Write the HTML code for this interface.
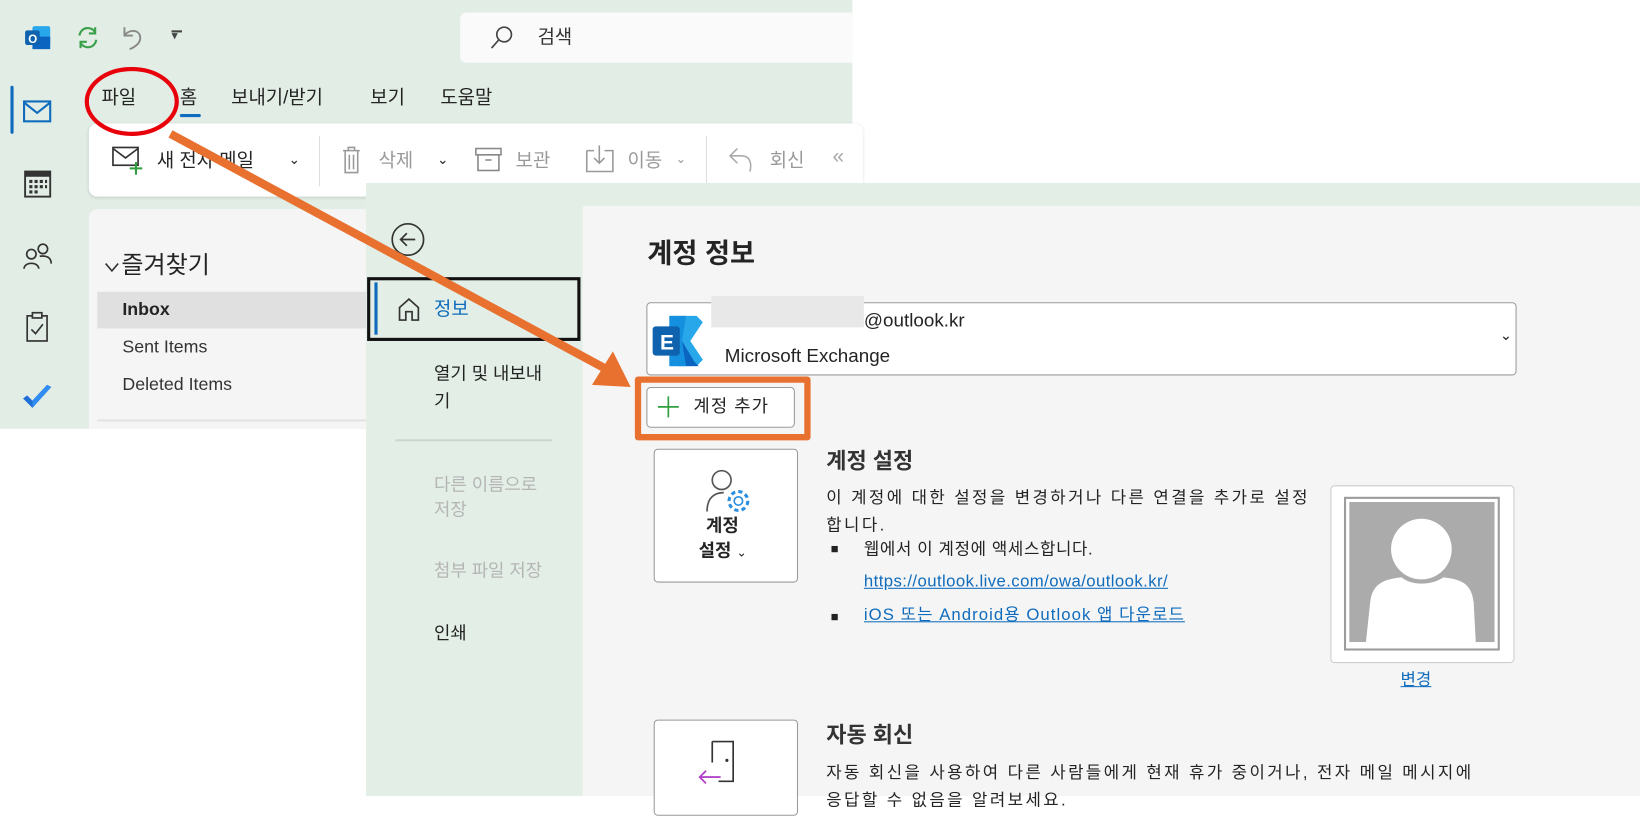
<!DOCTYPE html>
<html><head><meta charset="utf-8">
<style>
html,body{margin:0;padding:0;width:1640px;height:796px;overflow:hidden;background:#fff}
#s{position:absolute;left:0;top:0;width:1568px;height:761px;transform:scale(1.0459);transform-origin:0 0;font-family:"Liberation Sans","Noto Sans CJK KR",sans-serif;color:#242424}
.a{position:absolute}
.t{position:absolute;white-space:nowrap;line-height:1}
</style></head><body><div id="s">
<div class="a" style="left:0;top:0;width:815px;height:410px;background:#e2ede5"></div>
<div class="a" style="left:440px;top:12px;width:375px;height:48px;background:#fafafa;border-radius:6px 0 0 6px"></div>
<svg class="a" style="left:465px;top:22px" width="28" height="28" viewBox="0 0 28 28"><circle cx="17" cy="11" r="7" fill="none" stroke="#444" stroke-width="1.6"/><path d="M12 16 L5 24" stroke="#444" stroke-width="1.6"/></svg>
<div class="t" style="left:514px;top:26px;font-size:18px;color:#333">검색</div>
<svg class="a" style="left:22px;top:22px" width="28" height="28"><rect x="9" y="3" width="17" height="20" rx="2" fill="#28a8ea"/><rect x="9" y="13" width="17" height="12" fill="#0a64c0"/><rect x="2" y="7" width="14" height="14" rx="2" fill="#0f62ae"/><text x="5" y="19" font-size="11" font-weight="bold" fill="#fff" font-family="Liberation Sans">O</text></svg>
<svg class="a" style="left:70px;top:22px" width="28" height="28"><path d="M6 12 A8 8 0 0 1 21 9 M22 16 A8 8 0 0 1 7 19" fill="none" stroke="#3aa04a" stroke-width="2"/><path d="M21 4 V10 H15 M7 24 V18 H13" fill="none" stroke="#3aa04a" stroke-width="2"/></svg>
<svg class="a" style="left:113px;top:22px" width="28" height="28"><path d="M6 4 V12 H14 M6 12 C10 6 20 6 21 13 C22 19 16 23 11 25" fill="none" stroke="#888" stroke-width="1.8"/></svg>
<div class="t" style="left:164px;top:28px;font-size:12px;color:#444">▾</div>
<div class="a" style="left:164px;top:29px;width:10px;height:1.5px;background:#444"></div>
<div class="a" style="left:10px;top:82px;width:3px;height:46px;background:#0f6cbd;border-radius:2px"></div>
<svg class="a" style="left:22px;top:95px" width="28" height="24"><rect x="1" y="2" width="25" height="19" fill="none" stroke="#0f6cbd" stroke-width="2"/><path d="M1 3 L13.5 13 L26 3" fill="none" stroke="#0f6cbd" stroke-width="2"/></svg>
<svg class="a" style="left:22px;top:160px" width="28" height="30"><rect x="2" y="4" width="24" height="24" fill="none" stroke="#333" stroke-width="1.8"/><rect x="2" y="4" width="24" height="5" fill="#333"/><g fill="#333"><rect x="6" y="12" width="3" height="3"/><rect x="11" y="12" width="3" height="3"/><rect x="16" y="12" width="3" height="3"/><rect x="21" y="12" width="2" height="3"/><rect x="6" y="17" width="3" height="3"/><rect x="11" y="17" width="3" height="3"/><rect x="16" y="17" width="3" height="3"/><rect x="21" y="17" width="2" height="3"/><rect x="6" y="22" width="3" height="3"/><rect x="11" y="22" width="3" height="3"/></g></svg>
<svg class="a" style="left:20px;top:230px" width="32" height="30"><circle cx="10" cy="13" r="4.5" fill="none" stroke="#333" stroke-width="1.6"/><path d="M3 27 C3 20 17 20 17 27" fill="none" stroke="#333" stroke-width="1.6"/><circle cx="21" cy="8" r="4.5" fill="none" stroke="#333" stroke-width="1.6"/><path d="M18 15 C24 14 29 16 29 22" fill="none" stroke="#333" stroke-width="1.6"/></svg>
<svg class="a" style="left:22px;top:297px" width="28" height="32"><rect x="4" y="5" width="19" height="24" fill="none" stroke="#333" stroke-width="1.6"/><rect x="9" y="2" width="9" height="5" fill="#e2ede5" stroke="#333" stroke-width="1.6"/><path d="M8 18 L12 22 L19 13" fill="none" stroke="#333" stroke-width="1.6"/></svg>
<svg class="a" style="left:20px;top:366px" width="32" height="28"><path d="M2 15 L11 24 L29 4 L25 2 L11 17 L6 12 Z" fill="#1f6fd6"/><path d="M11 24 L29 4 L25 2 L11 17Z" fill="#2f8cf0"/></svg>
<div class="t" style="left:97px;top:84px;font-size:18px">파일</div>
<div class="t" style="left:172px;top:84px;font-size:18px">홈</div>
<div class="a" style="left:172px;top:109px;width:20px;height:3px;background:#0f6cbd;border-radius:2px"></div>
<div class="t" style="left:221px;top:84px;font-size:18px">보내기/받기</div>
<div class="t" style="left:354px;top:84px;font-size:18px">보기</div>
<div class="t" style="left:421px;top:84px;font-size:18px">도움말</div>
<div class="a" style="left:85px;top:118px;width:740px;height:70px;background:#fff;border-radius:8px;box-shadow:0 1px 3px rgba(0,0,0,.12)"></div>
<svg class="a" style="left:106px;top:138px" width="36" height="32"><rect x="2" y="3" width="24" height="17" fill="none" stroke="#333" stroke-width="1.6"/><path d="M2 4 L14 13 L26 4" fill="none" stroke="#333" stroke-width="1.6"/><path d="M24 17 V29 M18 23 H30" stroke="#2e9e3e" stroke-width="2"/></svg>
<div class="t" style="left:150px;top:144px;font-size:18px">새 전자 메일</div>
<div class="t" style="left:276px;top:146px;font-size:13px">⌄</div>
<div class="a" style="left:305px;top:130px;width:1px;height:48px;background:#ddd"></div>
<svg class="a" style="left:325px;top:138px" width="22" height="30"><path d="M3 6 H19 M8 6 V3 H14 V6 M5 6 V27 H17 V6 M9 10 V24 M13 10 V24" fill="none" stroke="#999" stroke-width="1.5"/></svg>
<div class="t" style="left:362px;top:144px;font-size:18px;color:#999">삭제</div>
<div class="t" style="left:418px;top:146px;font-size:13px">⌄</div>
<svg class="a" style="left:453px;top:140px" width="30" height="26"><rect x="2" y="2" width="24" height="6" fill="none" stroke="#888" stroke-width="1.5"/><rect x="4" y="8" width="20" height="15" fill="none" stroke="#888" stroke-width="1.5"/><path d="M11 13 H17" stroke="#888" stroke-width="1.5"/></svg>
<div class="t" style="left:493px;top:144px;font-size:18px;color:#999">보관</div>
<svg class="a" style="left:558px;top:136px" width="32" height="32"><path d="M3 8 H10 M20 8 H28 V28 H3 V8" fill="none" stroke="#999" stroke-width="1.5"/><path d="M15 3 V20 M10 15 L15 20 L20 15" fill="none" stroke="#999" stroke-width="1.5"/></svg>
<div class="t" style="left:600px;top:144px;font-size:18px;color:#999">이동</div>
<div class="t" style="left:646px;top:146px;font-size:12px;color:#999">⌄</div>
<div class="a" style="left:675px;top:130px;width:1px;height:48px;background:#ddd"></div>
<svg class="a" style="left:695px;top:138px" width="28" height="30"><path d="M10 4 L3 11 L10 18 M3 11 H14 C22 11 24 18 22 26" fill="none" stroke="#aaa" stroke-width="1.5"/></svg>
<div class="t" style="left:736px;top:144px;font-size:18px;color:#999">회신</div>
<div class="t" style="left:796px;top:140px;font-size:20px;color:#aaa">«</div>
<div class="a" style="left:85px;top:200px;width:280px;height:210px;background:#f5f5f5;border-radius:8px 8px 0 0"></div>
<svg class="a" style="left:99px;top:250px" width="16" height="12"><path d="M2 2 L8 9 L14 2" fill="none" stroke="#333" stroke-width="1.5"/></svg>
<div class="t" style="left:116px;top:242px;font-size:23px">즐겨찾기</div>
<div class="a" style="left:93px;top:279px;width:270px;height:35px;background:#e0e0e0"></div>
<div class="t" style="left:117px;top:287px;font-size:17px;font-weight:bold">Inbox</div>
<div class="t" style="left:117px;top:323px;font-size:17px;color:#333">Sent Items</div>
<div class="t" style="left:117px;top:359px;font-size:17px;color:#333">Deleted Items</div>
<div class="a" style="left:93px;top:401px;width:270px;height:2px;background:#e3e3e3"></div>
<div class="a" style="left:350px;top:175px;width:1218px;height:586px;background:#e2eee6"></div>
<div class="a" style="left:557px;top:197px;width:1011px;height:564px;background:#f5f5f5"></div>
<svg class="a" style="left:373px;top:212px" width="34" height="34"><circle cx="17" cy="17" r="15" fill="none" stroke="#333" stroke-width="1.6"/><path d="M24 17 H10 M16 11 L10 17 L16 23" fill="none" stroke="#333" stroke-width="1.6"/></svg>
<div class="a" style="left:351px;top:265px;width:198px;height:55px;border:3px solid #111"></div>
<div class="a" style="left:358px;top:270px;width:3px;height:50px;background:#0f6cbd"></div>
<svg class="a" style="left:379px;top:283px" width="24" height="26"><path d="M3 11 L12 3 L21 11 V23 H15 V15 H9 V23 H3 Z" fill="none" stroke="#333" stroke-width="1.6"/></svg>
<div class="t" style="left:415px;top:286px;font-size:18px;color:#0f6cbd">정보</div>
<div class="t" style="left:415px;top:345px;font-size:17px;line-height:26px">열기 및 내보내<br>기</div>
<div class="a" style="left:378px;top:420px;width:150px;height:2px;background:#ccd6cf"></div>
<div class="t" style="left:415px;top:452px;font-size:17px;line-height:24px;color:#b5b5b5">다른 이름으로<br>저장</div>
<div class="t" style="left:415px;top:537px;font-size:17px;color:#b5b5b5">첨부 파일 저장</div>
<div class="t" style="left:415px;top:597px;font-size:17px">인쇄</div>
<div class="t" style="left:619px;top:229px;font-size:26px;font-weight:bold">계정 정보</div>
<div class="a" style="left:618px;top:289px;width:830px;height:68px;background:#fff;border:1.5px solid #9a9a9a;border-radius:4px"></div>
<svg class="a" style="left:622px;top:298px" width="52" height="56"><path d="M18 4 H44 L50 10 L38 28 L50 46 L44 52 H18 Z" fill="#28a8ea"/><path d="M30 28 L42 48 L46 52 H26 Z" fill="#0a64c0"/><path d="M18 4 H34 L30 28 L34 52 H18Z" fill="#1490df"/><rect x="2" y="14" width="26" height="28" rx="3" fill="#0f62ae"/><text x="9" y="36" font-size="20" font-weight="bold" fill="#fff" font-family="Liberation Sans">E</text></svg>
<div class="a" style="left:680px;top:283px;width:146px;height:30px;background:#e8e8e8"></div>
<div class="t" style="left:826px;top:297px;font-size:18px">@outlook.kr</div>
<div class="t" style="left:693px;top:331px;font-size:18px">Microsoft Exchange</div>
<div class="t" style="left:1434px;top:313px;font-size:14px">⌄</div>
<div class="a" style="left:607px;top:360px;width:156px;height:49px;border:6px solid #e8712f;border-radius:3px"></div>
<div class="a" style="left:618px;top:370px;width:140px;height:37px;background:#fff;border:1px solid #999;border-radius:4px"></div>
<svg class="a" style="left:627px;top:377px" width="24" height="24"><path d="M12 2 V22 M2 12 H22" stroke="#2e9e3e" stroke-width="1.6"/></svg>
<div class="t" style="left:663px;top:380px;font-size:17px;letter-spacing:1px">계정 추가</div>
<svg class="a" style="left:0;top:0" width="800" height="420"><path d="M163 128 L578 352" stroke="#e8712f" stroke-width="8" fill="none"/><path d="M603 370 L566 368 L586 336 Z" fill="#e8712f"/></svg>
<svg class="a" style="left:76px;top:60px" width="100" height="72"><ellipse cx="50" cy="37" rx="43" ry="31" fill="none" stroke="#e8000b" stroke-width="4"/></svg>
<div class="a" style="left:625px;top:429px;width:136px;height:126px;background:#fff;border:1.5px solid #999;border-radius:4px"></div>
<svg class="a" style="left:670px;top:445px" width="50" height="48"><circle cx="20" cy="14" r="9" fill="none" stroke="#555" stroke-width="1.6"/><path d="M6 44 C6 30 14 26 22 26" fill="none" stroke="#555" stroke-width="1.6"/><circle cx="36" cy="34" r="9" fill="none" stroke="#2b8fe0" stroke-width="3" stroke-dasharray="4 3"/><circle cx="36" cy="34" r="4" fill="none" stroke="#2b8fe0" stroke-width="1.6"/></svg>
<div class="t" style="left:675px;top:494px;font-size:17px;font-weight:bold">계정</div>
<div class="t" style="left:668px;top:518px;font-size:17px;font-weight:bold">설정 <span style="font-size:12px;font-weight:normal">⌄</span></div>
<div class="t" style="left:790px;top:431px;font-size:21px;font-weight:bold;color:#333">계정 설정</div>
<div class="t" style="left:790px;top:464px;font-size:16px;line-height:26px;letter-spacing:2.3px">이 계정에 대한 설정을 변경하거나 다른 연결을 추가로 설정<br>합니다.</div>
<div class="a" style="left:795px;top:522px;width:6px;height:6px;background:#222"></div>
<div class="t" style="left:826px;top:518px;font-size:16px;letter-spacing:0.6px">웹에서 이 계정에 액세스합니다.</div>
<div class="t" style="left:826px;top:549px;font-size:16px;color:#0f6cbd;text-decoration:underline;letter-spacing:0.4px">https://outlook.live.com/owa/outlook.kr/</div>
<div class="a" style="left:795px;top:587px;width:6px;height:6px;background:#222"></div>
<div class="t" style="left:826px;top:581px;font-size:16px;color:#0f6cbd;text-decoration:underline;letter-spacing:1px">iOS 또는 Android용 Outlook 앱 다운로드</div>
<div class="a" style="left:1272px;top:464px;width:174px;height:168px;background:#fff;border:1px solid #ccc;border-radius:4px"></div>
<div class="a" style="left:1285px;top:475px;width:145px;height:143px;border:2px solid #9c9c9c;background:#fff"></div>
<svg class="a" style="left:1290px;top:480px" width="139" height="134"><rect width="139" height="134" fill="#ababab"/><circle cx="69" cy="45" r="29" fill="#fff"/><path d="M16 134 L20 96 C22 80 30 74 50 72 C60 80 78 80 90 72 C110 74 117 80 119 96 L121 134Z" fill="#fff"/></svg>
<div class="t" style="left:1339px;top:643px;font-size:16px;color:#0f6cbd;text-decoration:underline">변경</div>
<div class="a" style="left:625px;top:688px;width:136px;height:90px;background:#fff;border:1.5px solid #999;border-radius:4px"></div>
<svg class="a" style="left:665px;top:705px" width="50" height="50"><path d="M16 4 H36 V42 H22" fill="none" stroke="#333" stroke-width="1.6"/><path d="M16 4 V24" stroke="#333" stroke-width="1.6"/><circle cx="30" cy="22" r="1.5" fill="#333"/><path d="M24 38 H4 M10 32 L4 38 L10 44" fill="none" stroke="#b345c8" stroke-width="1.8"/></svg>
<div class="t" style="left:790px;top:693px;font-size:21px;font-weight:bold;color:#333">자동 회신</div>
<div class="t" style="left:790px;top:727px;font-size:16px;line-height:26px;letter-spacing:2.3px">자동 회신을 사용하여 다른 사람들에게 현재 휴가 중이거나, 전자 메일 메시지에<br>응답할 수 없음을 알려보세요.</div>
</div></body></html>
